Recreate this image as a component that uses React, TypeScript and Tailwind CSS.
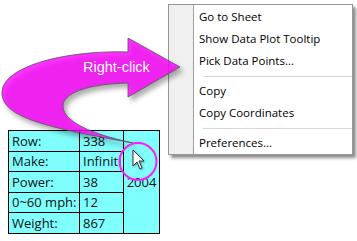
import { Fragment } from "react";

const menuItems: (string | null)[] = [
  "Go to Sheet",
  "Show Data Plot Tooltip",
  "Pick Data Points...",
  null,
  "Copy",
  "Copy Coordinates",
  null,
  "Preferences...",
];

const rows = [
  ["Row:", "338"],
  ["Make:", "Infiniti"],
  ["Power:", "38"],
  ["0~60 mph:", "12"],
  ["Weight:", "867"],
];

function DataTable() {
  return (
    <div className="mt-[130px] grid grid-cols-[71px_44px_36px] grid-rows-[21px_20px_21px_20px_21px] border-l border-t border-black bg-[#80ffff] font-['Open_Sans',sans-serif] text-[13px] leading-none text-[#111]">
      <div className="col-start-3 row-span-5 row-start-1 flex items-center justify-center border-r border-b border-black">
        2004
      </div>
      {rows.map(([label, value]) => (
        <Fragment key={label}>
          <div className="flex items-center border-r border-b border-black pl-[3px]">
            {label}
          </div>
          <div className="flex items-center overflow-hidden whitespace-nowrap border-r border-b border-black pl-[3px]">
            {value}
          </div>
        </Fragment>
      ))}
    </div>
  );
}

function ContextMenu() {
  return (
    <div className="mt-[4px] flex w-[185px] border border-[#979797] bg-white shadow-[3px_3px_3px_rgba(0,0,0,0.45)]">
      <div className="w-[25px] shrink-0 border-r border-[#a0a0a0] bg-[#f0f0f0]" />
      <div className="flex-1 pt-px font-['Open_Sans',sans-serif] text-[11.5px] text-black">
        {menuItems.map((item, i) =>
          item ? (
            <div key={i} className="flex h-[22px] items-center pl-[5px]">
              {item}
            </div>
          ) : (
            <div key={i} className="flex h-[8px] items-center pl-[9px]">
              <div className="h-px flex-1 bg-[#d7d7d7]" />
            </div>
          )
        )}
      </div>
    </div>
  );
}

function Overlay() {
  return (
    <svg
      className="pointer-events-none absolute inset-0"
      width="357"
      height="241"
      viewBox="0 0 357 241"
    >
      <g style={{ filter: "drop-shadow(3px 4px 2.5px rgba(0,0,0,0.4))" }}>
        <path
          d="M180 67 L128 38 L128 52 C70 50 2 65 2 93 C2 118 50 128 133 143 C105 137 63 125 63 106 C63 94 85 84 128 83 L128 97 Z"
          fill="#ff00ff"
          fillOpacity="0.8"
          stroke="#555"
          strokeWidth="0.8"
        />
      </g>
      <text
        x="83"
        y="72"
        fill="white"
        fontFamily="'Liberation Sans', Arial, sans-serif"
        fontSize="14.5"
      >
        Right-click
      </text>
      <circle cx="138" cy="161.5" r="18.5" fill="none" stroke="#ff1aff" strokeWidth="2" />
      <path
        d="M133 150 V166 L137 162 L140 169 L142 168 L139 161 H144 Z"
        fill="white"
        stroke="#222"
        strokeWidth="0.9"
        strokeLinejoin="round"
        style={{ filter: "drop-shadow(1px 1px 1px rgba(0,0,0,0.35))" }}
      />
    </svg>
  );
}

export default function App() {
  return (
    <div className="relative h-[241px] w-[357px] overflow-hidden bg-white">
      <div className="flex items-start gap-2 pl-2">
        <DataTable />
        <ContextMenu />
      </div>
      <Overlay />
    </div>
  );
}
